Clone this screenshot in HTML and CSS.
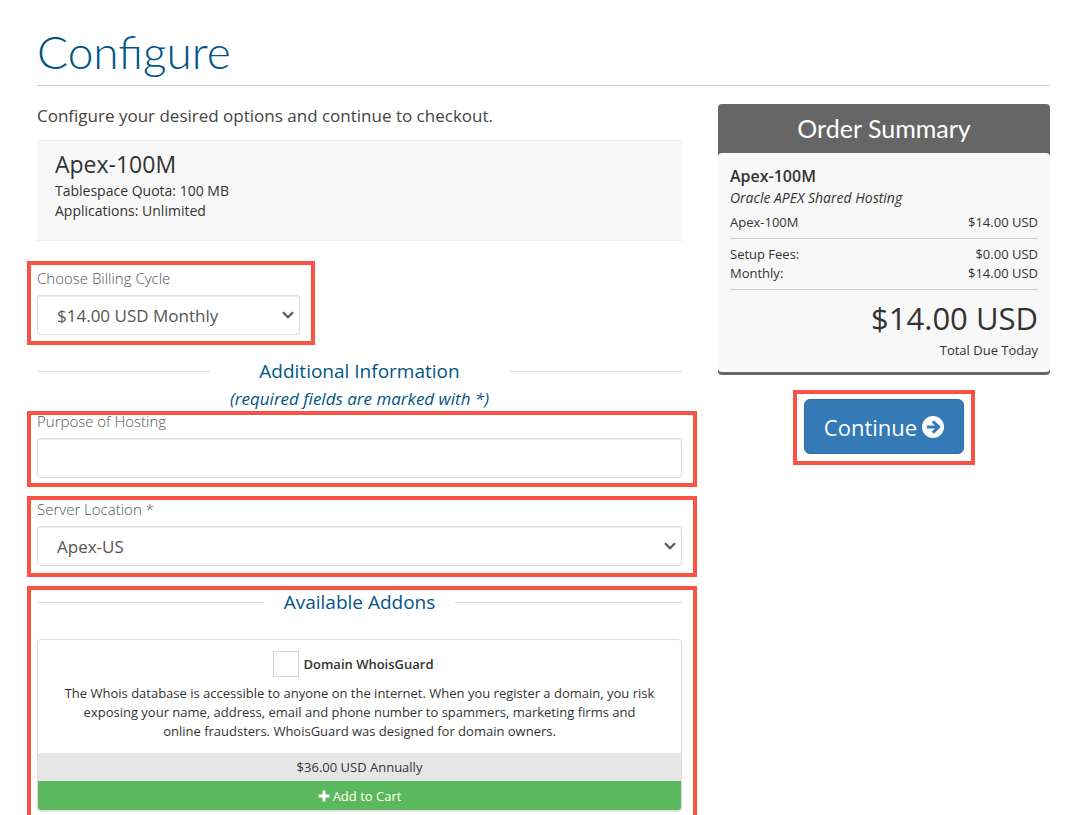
FILE: index.html
```html
<!DOCTYPE html>
<html lang="en">
<head>
<meta charset="utf-8">
<title>Configure</title>
<link rel="stylesheet" href="styles.css">
</head>
<body>
<div class="page">
  <header class="page-header">
    <h1>Configure</h1>
  </header>
  <div class="layout">
    <main>
      <p class="intro">Configure your desired options and continue to checkout.</p>
      <section class="product">
        <h2>Apex-100M</h2>
        <p>Tablespace Quota: 100 MB<br>Applications: Unlimited</p>
      </section>

      <div class="marked field field-cycle">
        <label for="cycle">Choose Billing Cycle</label>
        <div class="select-wrap">
          <select id="cycle"><option>$14.00 USD Monthly</option></select>
          <svg class="chevron" viewBox="0 0 12 8" aria-hidden="true"><path d="M1 1.2 6 6.2 11 1.2"/></svg>
        </div>
      </div>

      <h3 class="divider"><span>Additional Information<em>(required fields are marked with *)</em></span></h3>

      <div class="marked field field-purpose">
        <label for="purpose">Purpose of Hosting</label>
        <input type="text" id="purpose">
      </div>

      <div class="marked field field-server">
        <label for="server">Server Location *</label>
        <div class="select-wrap">
          <select id="server"><option>Apex-US</option></select>
          <svg class="chevron" viewBox="0 0 12 8" aria-hidden="true"><path d="M1 1.2 6 6.2 11 1.2"/></svg>
        </div>
      </div>

      <section class="marked addons">
        <h3 class="divider"><span>Available Addons</span></h3>
        <div class="addon">
          <div class="addon-body">
            <label class="addon-name"><input type="checkbox"> Domain WhoisGuard</label>
            <p>The Whois database is accessible to anyone on the internet. When you register a domain, you risk exposing your name, address, email and phone number to spammers, marketing firms and online fraudsters. WhoisGuard was designed for domain owners.</p>
          </div>
          <div class="addon-price">$36.00 USD Annually</div>
          <button class="addon-add" type="button"><svg viewBox="0 0 12 12" aria-hidden="true"><path d="M4.5 0.5h3v4h4v3h-4v4h-3v-4h-4v-3h4z"/></svg>Add to Cart</button>
        </div>
      </section>
    </main>

    <aside>
      <section class="summary">
        <h2>Order Summary</h2>
        <div class="summary-body">
          <strong class="summary-name">Apex-100M</strong>
          <em class="summary-group">Oracle APEX Shared Hosting</em>
          <div class="row"><span>Apex-100M</span><span>$14.00 USD</span></div>
          <div class="summary-totals">
            <div class="row"><span>Setup Fees:</span><span>$0.00 USD</span></div>
            <div class="row"><span>Monthly:</span><span>$14.00 USD</span></div>
          </div>
          <div class="total">$14.00 USD</div>
          <div class="total-label">Total Due Today</div>
        </div>
      </section>
      <div class="marked checkout">
        <button class="continue" type="button">Continue
          <svg viewBox="0 0 22 22" aria-hidden="true"><circle cx="11" cy="11" r="11"/><path d="M4.8 11h11M10.8 5.2 16.6 11l-5.8 5.8"/></svg>
        </button>
      </div>
    </aside>
  </div>
</div>
</body>
</html>
```
FILE: styles.css
```css
* { box-sizing: border-box; }

body {
  margin: 0;
  background: #fff;
  color: #333;
  font-family: "Open Sans", "Noto Sans", sans-serif;
  font-size: 13px;
  line-height: 19px;
}

h1, h2, h3, p { margin: 0; font-weight: 400; }
button, input, select { font-family: inherit; }

.page { padding: 28px 30px 0 27px; }

.page-header {
  margin-left: 10px;
  padding-bottom: 9px;
  border-bottom: 1px solid #ccc;
}
.page-header h1 {
  color: #058;
  font-family: Lato, sans-serif;
  font-weight: 300;
  font-size: 46px;
  line-height: 48px;
}

.layout {
  display: grid;
  grid-template-columns: minmax(0, 1fr) 332px;
  column-gap: 21px;
  align-items: start;
  margin-top: 18px;
}

.intro {
  margin: 0 15px 12px 10px;
  font-size: 17px;
  line-height: 24px;
  color: #444;
}

.product {
  margin: 0 15px 20px 10px;
  padding: 11px 18px 19px;
  background: #f8f8f8;
  border: solid #efefef;
  border-width: 1px 0;
}
.product h2 { font-size: 23px; line-height: 24px; margin-bottom: 5px; }
.product p { font-size: 14px; line-height: 20px; }

/* Red callout frame drawn inside the block's edge */
.marked { outline: 4px solid #fb5246; outline-offset: -4px; }

.field { padding: 0 15px 0 10px; }
.field label {
  display: block;
  margin-bottom: 7px;
  font-size: 15px;
  font-weight: 300;
  line-height: 20px;
  color: #555;
}
.field input,
.field select {
  display: block;
  width: 100%;
  height: 40px;
  padding: 0 19px;
  border: 1px solid #ddd;
  border-radius: 3px;
  background: #fff;
  box-shadow: inset 0 1px 1px rgba(0, 0, 0, .08);
  color: #555;
  font-size: 17px;
  appearance: none;
}
.select-wrap { position: relative; }
.chevron {
  position: absolute;
  right: 6px;
  top: 16px;
  width: 12px;
  height: 8px;
  fill: none;
  stroke: #555;
  stroke-width: 2.2;
  pointer-events: none;
}

.field-cycle { width: 43%; margin-bottom: 12px; padding-top: 7px; padding-bottom: 10px; }
.field-purpose { margin-bottom: 9px; padding-bottom: 9px; }
.field-server { margin-bottom: 9px; padding-top: 3px; padding-bottom: 11px; }

.divider {
  display: flex;
  margin: 0 15px 0 10px;
  color: #058;
  font-size: 19px;
  line-height: 28px;
  text-align: center;
}
.divider::before,
.divider::after {
  content: "";
  flex: 1;
  height: 1px;
  margin-top: 14px;
  background: #ddd;
}
.divider span { padding: 0 20px; }
.divider em { display: block; margin-top: 2px; font-size: 17px; line-height: 24px; }

.addons { padding: 2px 15px 20px 10px; }
.addons .divider { margin: 0 0 23px; }

.addon {
  overflow: hidden;
  border: 1px solid #ddd;
  border-radius: 4px;
  box-shadow: 0 1px 1px rgba(0, 0, 0, .1);
  text-align: center;
}
.addon-body { padding: 11px 26px 12px; }
.addon-name {
  display: flex;
  justify-content: center;
  align-items: center;
  gap: 4px;
  margin-bottom: 7px;
  padding-right: 12px;
  font-weight: 600;
}
.addon-name input {
  width: 26px;
  height: 26px;
  margin: 0;
  border: 1px solid #d9d4cc;
  background: #fff;
  appearance: none;
}
.addon-price { padding: 5px; background: #e6e6e6; line-height: 18px; }
.addon-add {
  display: flex;
  justify-content: center;
  align-items: center;
  gap: 3px;
  width: 100%;
  height: 29px;
  border: 0;
  background: #5cb85c;
  color: #fff;
  font-size: 13px;
}
.addon-add svg { width: 12px; height: 12px; fill: #fff; }

.summary {
  padding-bottom: 3px;
  border-radius: 4px;
  background: #666;
}
.summary h2 {
  color: #fff;
  font-family: Lato, sans-serif;
  font-size: 25px;
  line-height: 49px;
  text-align: center;
}
.summary-body {
  display: flex;
  flex-direction: column;
  padding: 13px 12px 12px;
  border-radius: 4px;
  background: #f8f8f8;
}
.summary-name { margin-bottom: 2px; font-size: 16px; font-weight: 600; line-height: 20px; }
.summary-group { margin-bottom: 6px; font-size: 14px; }
.row { display: flex; justify-content: space-between; }
.summary-totals {
  margin: 6px 0 8px;
  padding: 6px 0;
  border: solid #ccc;
  border-width: 1px 0;
}
.total { font-size: 31px; line-height: 40px; text-align: right; }
.total-label { margin-top: 3px; text-align: right; }

.checkout {
  width: fit-content;
  margin: 15px auto 0;
  padding: 9px 11px 11px;
}
.continue {
  display: flex;
  align-items: center;
  gap: 5px;
  height: 55px;
  padding: 0 19px;
  border: 1px solid #2e6da4;
  border-radius: 6px;
  background: #337ab7;
  color: #fff;
  font-size: 22px;
}
.continue svg { width: 22px; height: 22px; fill: #fff; }
.continue path { fill: none; stroke: #337ab7; stroke-width: 3; }
```
